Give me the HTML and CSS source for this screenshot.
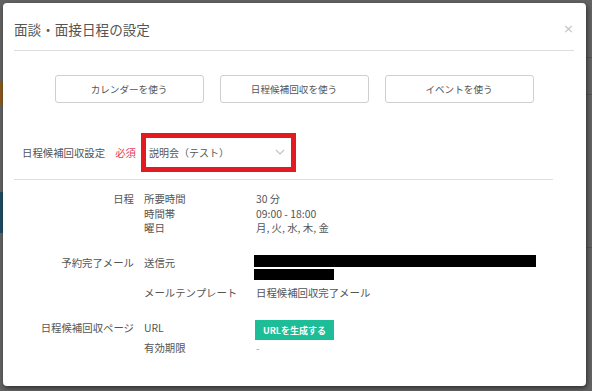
FILE: index.html
```html
<!DOCTYPE html>
<html lang="ja">
<head>
    <meta charset="UTF-8">
    <meta name="viewport" content="width=device-width, initial-scale=1.0">
    <title>面談・面接日程の設定</title>
    <link rel="stylesheet" href="styles.css">
</head>
<body>
    <div class="backdrop">
        <span class="bg-piece bg-orange"></span>
        <span class="bg-piece bg-blue"></span>
        <span class="bg-piece bg-line bg-line-1"></span>
        <span class="bg-piece bg-line bg-line-2"></span>
        <span class="bg-piece bg-line bg-line-3"></span>
    </div>

    <div class="modal">
        <div class="modal-header">
            <h3 class="modal-title">面談・面接日程の設定</h3>
            <span class="modal-close">×</span>
        </div>

        <div class="modal-body">
            <div class="mode-buttons">
                <button class="mode-button">カレンダーを使う</button>
                <button class="mode-button">日程候補回収を使う</button>
                <button class="mode-button">イベントを使う</button>
            </div>

            <div class="setting-row">
                <span class="setting-label">日程候補回収設定</span>
                <span class="required">必須</span>
                <div class="select-box">
                    <span>説明会（テスト）</span>
                    <svg class="chevron" width="10" height="6" viewBox="0 0 10 6">
                        <path d="M1 1 L5 5 L9 1" fill="none" stroke="#c4c4c4" stroke-width="1.2"/>
                    </svg>
                </div>
            </div>

            <div class="details">
                <div class="group">
                    <div class="group-label">日程</div>
                    <div class="item-label">所要時間</div>
                    <div class="item-value">30 分</div>
                    <div class="item-label">時間帯</div>
                    <div class="item-value">09:00 - 18:00</div>
                    <div class="item-label">曜日</div>
                    <div class="item-value">月, 火, 水, 木, 金</div>
                </div>

                <div class="group">
                    <div class="group-label">予約完了メール</div>
                    <div class="item-label">送信元</div>
                    <div class="item-value redacted">
                        <span class="bar bar-long"></span>
                        <span class="bar bar-short"></span>
                    </div>
                    <div class="item-label">メールテンプレート</div>
                    <div class="item-value">日程候補回収完了メール</div>
                </div>

                <div class="group">
                    <div class="group-label url-label">日程候補回収ページ</div>
                    <div class="item-label url-label">URL</div>
                    <div class="item-value"><button class="generate-button">URLを生成する</button></div>
                    <div class="item-label">有効期限</div>
                    <div class="item-value empty">-</div>
                </div>
            </div>
        </div>
    </div>
</body>
</html>
```

FILE: styles.css
```css
body {
    margin: 0;
    padding: 3px 6px 5px 3px;
    height: 391px;
    box-sizing: border-box;
    background-color: #636363;
    font-family: "Noto Sans CJK JP", "Noto Sans", sans-serif;
    color: #555;
    display: flex;
    overflow: hidden;
}

.backdrop {
    position: absolute;
    inset: 0;
}
.bg-piece {
    position: absolute;
    display: block;
}
.bg-orange {
    left: 0;
    top: 82px;
    width: 4px;
    height: 23px;
    background-color: #8a5a20;
}
.bg-blue {
    left: 0;
    top: 192px;
    width: 4px;
    height: 41px;
    background-color: #1f4c63;
}
.bg-line {
    height: 1px;
    background-color: #555;
}
.bg-line-1 { right: 0; top: 57px; width: 8px; }
.bg-line-2 { right: 0; top: 94px; width: 8px; }
.bg-line-3 { right: 0; top: 247px; width: 8px; }

.modal {
    position: relative;
    flex: 1;
    background-color: #fff;
    border-radius: 4px;
    box-shadow: 1px 2px 5px rgba(0, 0, 0, 0.55);
    padding: 0 12px 0 11px;
}

.modal-header {
    display: flex;
    align-items: center;
    justify-content: space-between;
    height: 48px;
    box-sizing: border-box;
    padding-top: 4px;
    border-bottom: 1px solid #dedede;
}
.modal-title {
    margin: 0;
    font-size: 13.6px;
    font-weight: normal;
    color: #555;
}
.modal-close {
    font-family: "DejaVu Sans", sans-serif;
    font-size: 13px;
    color: #c2c2c2;
    margin-right: 0;
}

.mode-buttons {
    display: flex;
    justify-content: center;
    gap: 16px;
    margin-top: 24px;
}
.mode-button {
    width: 149px;
    height: 28px;
    background-color: #fff;
    border: 1px solid #cfcfcf;
    border-radius: 3px;
    font-family: inherit;
    font-size: 9.6px;
    color: #555;
}

.setting-row {
    display: flex;
    align-items: center;
    margin-top: 30px;
    margin-right: 21px;
    padding: 0 0 7px 8px;
    border-bottom: 1px solid #dedede;
}
.setting-label {
    font-size: 10.4px;
}
.required {
    font-size: 10.4px;
    color: #e5405a;
    margin-left: 10px;
}
.select-box {
    display: flex;
    align-items: center;
    justify-content: space-between;
    width: 155px;
    height: 39px;
    box-sizing: border-box;
    margin-left: 5px;
    padding: 0 6px 0 3px;
    border: 5.5px solid #e31b21;
    font-size: 10px;
    color: #555;
}
.chevron {
    margin-top: -2px;
}

.details {
    padding-top: 12px;
    font-size: 10.4px;
    line-height: 14.7px;
}
.group {
    display: grid;
    grid-template-columns: 130px 112px 1fr;
    margin-bottom: 20px;
}
.group-label {
    grid-row: span 3;
    text-align: right;
    padding-right: 10px;
}
.item-label {
    grid-column: 2;
}
.item-value {
    grid-column: 3;
}
.redacted {
    display: flex;
    flex-direction: column;
    height: 29.4px;
    margin-left: -2px;
}
.bar {
    display: block;
    background-color: #000;
}
.bar-long {
    width: 282px;
    height: 12px;
    margin-top: -1px;
}
.bar-short {
    width: 80px;
    height: 11px;
    margin-top: 2px;
}
.url-label {
    padding-top: 1px;
}
.generate-button {
    display: block;
    height: 20px;
    width: 79px;
    margin: 0 0 1px -1px;
    padding: 0;
    border: none;
    background-color: #1dbd97;
    color: #fff;
    font-family: inherit;
    font-size: 9px;
    font-weight: bold;
}
.empty {
    color: #999;
    font-size: 10px;
}
```
